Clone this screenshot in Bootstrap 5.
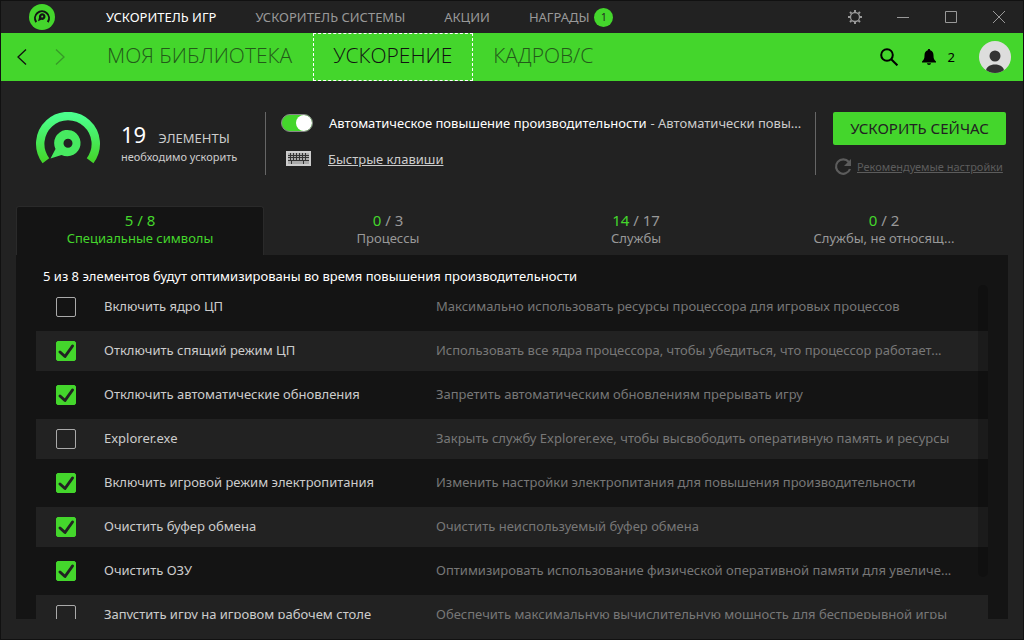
<!DOCTYPE html>
<html lang="ru" data-bs-theme="dark">
<head>
<meta charset="utf-8">
<meta name="viewport" content="width=device-width, initial-scale=1">
<title>Ускоритель игр</title>
<link href="https://cdn.jsdelivr.net/npm/bootstrap@5.3.0/dist/css/bootstrap.min.css" rel="stylesheet">
<style>
:root { --accent: #44d62c; --bg: #222; --panel: #141414; }
body { font-family: "Noto Sans", "Open Sans", sans-serif; font-size: 13px; line-height: 20px; background: var(--bg); color: #ccc; }
.app-window { border: 1px solid #111; }
button.plain { background: none; border: 0; padding: 0; color: inherit; display: flex; align-items: center; justify-content: center; }
svg { display: block; flex: none; }

.title-bar { height: 32px; padding-left: 28px; }
.title-menu { margin-left: 51px; gap: 39px; }
.title-menu a { color: #999; text-decoration: none; }
.title-menu a.active { color: #fff; }
.count-badge { width: 19px; height: 19px; font-size: 10px; background: var(--accent); color: #222; margin-left: 5px; }
.window-buttons { color: #999; }
.window-buttons button { width: 48px; height: 32px; }

.main-bar { height: 48px; background: var(--accent); color: #000; padding: 0 12px 0 10px; }
.main-bar .arrow { width: 22px; height: 48px; }
.main-tabs { margin-left: 16px; }
.main-tabs a { font-family: "Open Sans", "Noto Sans", sans-serif; font-weight: 300; font-size: 21px; line-height: 42px; height: 48px; padding: 0 20px 0 19px; border: 1px solid transparent; color: #235a1a; text-decoration: none; white-space: nowrap; }
.main-tabs a.active { color: #111; border: 1px dashed #fff; }

.summary { padding: 31px 15px 0; height: 125px; }
.summary .divided { height: 63px; border-left: 1px solid #666; }
.big-count { font-size: 22px; line-height: 26px; color: #fff; }
.count-note { font-size: 11px; line-height: 18px; }
.boost-info { width: 249px; padding-left: 19px; }
.boost-text { padding-top: 9px; }
.boost-switch.form-check-input { width: 32px; height: 18px; margin: 0; border: 1px solid #999; background-color: #333; box-shadow: none; flex: none; }
.boost-switch.form-check-input:checked { background-color: var(--accent); border-color: #888; --bs-form-switch-bg: url("data:image/svg+xml,%3csvg xmlns='http://www.w3.org/2000/svg' viewBox='-4 -4 8 8'%3e%3ccircle r='4' fill='%23fff'/%3e%3c/svg%3e"); background-image: var(--bs-form-switch-bg); background-position: right center; }
.options { padding: 1px 15px 0; }
.options a { color: #ccc; }
.actions { width: 193px; padding-left: 17px; flex: none; }
.btn-boost { background: var(--accent); color: #222; font-size: 15px; line-height: 21px; padding: 6px 0; border: 0; border-radius: 2px; width: 173px; white-space: nowrap; }
.btn-boost:hover { background: #5be045; color: #222; }
.actions a { color: #5c5c5c; font-size: 11px; white-space: nowrap; }

.group-tabs { margin: 0 15px; height: 49px; }
.group-tabs .nav-link { display: flex; flex-direction: column; align-items: center; height: 49px; padding: 4px 8px 0; background: none; border: 1px solid transparent; border-bottom: 0; border-radius: 0; color: #999; line-height: 18px; }
.group-tabs .tally { font-size: 15px; }
.group-tabs .tally b { font-weight: 400; color: var(--accent); }
.group-tabs .nav-link.active { background: var(--panel); color: var(--accent); border-color: #2a2a2a; border-radius: 3px 3px 0 0; }

.list-panel { margin: 0 15px 20px; padding: 11px 20px 0; background: var(--panel); }
.list-panel p { color: #fff; margin: 0 0 1px 7px; }
.list-body { min-height: 0; }
.item-row { display: grid; grid-template-columns: 48px 332px 1fr; align-items: center; height: 40px; margin-bottom: 4px; padding: 0 20px; }
.item-row:nth-child(even) { background: #222; }
.item-row label, .item-row .desc { padding-bottom: 2px; white-space: nowrap; }
.item-row label { color: #ccc; }
.item-row .desc { color: #777; }
.item-row .form-check-input { width: 20px; height: 20px; margin: 0; border: 1px solid #aaa; border-radius: 2px; background-color: transparent; box-shadow: none; }
.item-row .form-check-input:checked { background-color: var(--accent); border-color: var(--accent); background-size: 20px; background-image: url("data:image/svg+xml,%3csvg xmlns='http://www.w3.org/2000/svg' viewBox='0 0 20 20'%3e%3cpath fill='none' stroke='%23222' stroke-width='3' stroke-linecap='round' stroke-linejoin='round' d='M4 11l5 4.500L16.500 5'/%3e%3c/svg%3e"); }
.scroll-thumb { position: absolute; right: 0; top: -2px; bottom: 42px; width: 10px; border-radius: 5px; background: rgba(0,0,0,.2); }
</style>
</head>
<body>
<div class="app-window d-flex flex-column vh-100 overflow-hidden">
  <header class="title-bar d-flex align-items-center flex-shrink-0">
    <svg width="26" height="26" viewBox="0 0 26 26"><circle cx="13" cy="13" r="13" fill="#44d62c"/><path d="M7.200 18.100A7 7 0 1 1 18.800 18.100" fill="none" stroke="#141414" stroke-width="2"/><path fill="#141414" fill-rule="evenodd" d="M9 17.200l1-3.800a3.300 3.300 0 1 1 2.300 2.400zM13.200 11.600a1 1 0 1 0 .1 2 1 1 0 0 0-.1-2z"/></svg>
    <nav class="title-menu d-flex align-items-center text-nowrap">
      <a href="#" class="active">УСКОРИТЕЛЬ ИГР</a>
      <a href="#">УСКОРИТЕЛЬ СИСТЕМЫ</a>
      <a href="#">АКЦИИ</a>
      <a href="#" class="d-flex align-items-center">НАГРАДЫ<span class="count-badge rounded-circle d-flex align-items-center justify-content-center">1</span></a>
    </nav>
    <div class="window-buttons d-flex ms-auto">
      <button class="plain" aria-label="Настройки"><svg width="14" height="14" viewBox="0 0 14 14" fill="none" stroke="currentColor"><circle cx="7" cy="7" r="4.500" stroke-width="1.300"/><path stroke-width="2" d="M7 0v2M7 12v2M0 7h2M12 7h2M2 2l1.400 1.400M10.600 10.600L12 12M12 2l-1.400 1.400M3.400 10.600L2 12"/></svg></button>
      <button class="plain" aria-label="Свернуть"><svg width="12" height="12" viewBox="0 0 12 12" stroke="currentColor"><path d="M0 6.500h12"/></svg></button>
      <button class="plain" aria-label="Развернуть"><svg width="12" height="12" viewBox="0 0 12 12" fill="none" stroke="currentColor"><path d="M.5.5h11v11H.5z"/></svg></button>
      <button class="plain" aria-label="Закрыть"><svg width="12" height="12" viewBox="0 0 12 12" stroke="currentColor"><path d="M0 0l12 12M12 0L0 12"/></svg></button>
    </div>
  </header>

  <div class="main-bar d-flex align-items-center flex-shrink-0">
    <button class="plain arrow me-3" aria-label="Назад"><svg width="10" height="16" viewBox="0 0 10 16" fill="none" stroke="#111" stroke-width="1.300"><path d="M9 .5L1 8l8 7.500"/></svg></button>
    <button class="plain arrow" aria-label="Вперёд"><svg width="10" height="16" viewBox="0 0 10 16" fill="none" stroke="#379a28" stroke-width="1.300"><path d="M1 .5L9 8l-8 7.500"/></svg></button>
    <nav class="main-tabs d-flex">
      <a href="#">МОЯ БИБЛИОТЕКА</a>
      <a href="#" class="active">УСКОРЕНИЕ</a>
      <a href="#">КАДРОВ/С</a>
    </nav>
    <div class="d-flex align-items-center ms-auto">
      <button class="plain me-4" aria-label="Поиск"><svg width="18" height="18" viewBox="0 0 18 18" fill="none" stroke="#000" stroke-width="2"><circle cx="7" cy="7" r="5.800"/><path d="M11.200 11.200l6.200 6.200"/></svg></button>
      <button class="plain" aria-label="Уведомления"><svg width="14" height="16" viewBox="0 0 14 16"><path d="M7 0c.8 0 1.200.5 1.200 1.300C10.700 2 11.500 4 11.500 6.500c0 3 .6 4.200 2.500 6V13.500H0v-1c1.900-1.800 2.500-3 2.500-6 0-2.500.8-4.500 3.300-5.200C5.800.5 6.200 0 7 0zM5 14.300h4c0 1-.9 1.700-2 1.700s-2-.7-2-1.700z"/></svg><span class="ms-2 ps-1">2</span></button>
      <button class="plain ms-4" aria-label="Профиль"><svg width="32" height="32" viewBox="0 0 32 32"><defs><clipPath id="face"><circle cx="16" cy="16" r="16"/></clipPath></defs><g clip-path="url(#face)"><path fill="#ddd" d="M0 0h32v32H0z"/><circle cx="16" cy="15" r="5.500" fill="#333"/><path fill="#333" d="M7 32v-2c0-4 4-6.500 9-6.500s9 2.500 9 6.500v2z"/></g></svg></button>
    </div>
  </div>

  <section class="summary d-flex flex-shrink-0">
    <div class="boost-info d-flex flex-shrink-0">
      <svg width="66" height="66" viewBox="0 0 66 66"><defs><linearGradient id="ring" x1="0" y1="0" x2="0" y2="1"><stop offset="0" stop-color="#4bff8c"/><stop offset="1" stop-color="#44d62c"/></linearGradient></defs><path fill="none" stroke="url(#ring)" stroke-width="8.400" d="M10.900 48.700A27.800 27.800 0 1 1 55.100 48.700"/><path fill="#47ea60" fill-rule="evenodd" d="M15.500 46.500l5-9.500A13.200 13.200 0 1 1 26.500 43zM33 26.700a4.500 4.500 0 1 0 0 9 4.500 4.500 0 0 0 0-9z"/></svg>
      <div class="boost-text text-nowrap ms-3 ps-1">
        <div><span class="big-count">19</span><span class="ms-2 ps-1">ЭЛЕМЕНТЫ</span></div>
        <div class="count-note">необходимо ускорить</div>
      </div>
    </div>
    <div class="divided options flex-fill overflow-hidden">
      <div class="d-flex align-items-center form-switch p-0">
        <input class="form-check-input boost-switch" type="checkbox" role="switch" id="auto" checked>
        <label for="auto" class="text-white ms-3 text-nowrap">Автоматическое повышение производительности</label>
        <span class="ms-1 text-nowrap">- Автоматически повы...</span>
      </div>
      <div class="d-flex align-items-center mt-3 ps-1">
        <svg width="27" height="16" viewBox="0 0 27 16"><path fill="#ccc" d="M1 0h25v15H1z"/><path fill="#333" d="M3 2h21v11H3z"/><path fill="#aaa" d="M3 2h2v2H3zm3 0h2v2H6zm3 0h2v2H9zm3 0h2v2h-2zm3 0h2v2h-2zm3 0h2v2h-2zm3 0h3v2h-3zM3 5h2v4H3zm3 0h2v4H6zm3 0h2v4H9zm3 0h2v4h-2zm3 0h2v4h-2zm3 0h2v4h-2zm3 0h3v4h-3zM3 10h3v3H3zm4 0h11v3H7zm12 0h5v3h-5z"/><path stroke="#333" d="M3 6.500h21"/></svg>
        <a href="#" class="ms-3">Быстрые клавиши</a>
      </div>
    </div>
    <div class="divided actions">
      <button class="btn btn-boost">УСКОРИТЬ СЕЙЧАС</button>
      <div class="d-flex align-items-center mt-2 pt-1">
        <svg width="20" height="20" viewBox="0 0 20 20"><path fill="none" stroke="#5c5c5c" stroke-width="2.200" d="M15.800 5A7.200 7.200 0 1 0 17 12"/><path fill="#5c5c5c" d="M18 2v7h-7z"/></svg>
        <a href="#" class="ms-1">Рекомендуемые настройки</a>
      </div>
    </div>
  </section>

  <nav class="group-tabs nav nav-fill flex-nowrap flex-shrink-0" role="tablist">
    <button class="nav-link active col-3" role="tab"><span class="tally">5 / 8</span><span>Специальные символы</span></button>
    <button class="nav-link col-3" role="tab"><span class="tally"><b>0</b> / 3</span><span>Процессы</span></button>
    <button class="nav-link col-3" role="tab"><span class="tally"><b>14</b> / 17</span><span>Службы</span></button>
    <button class="nav-link col-3" role="tab"><span class="tally"><b>0</b> / 2</span><span>Службы, не относящ...</span></button>
  </nav>

  <main class="list-panel d-flex flex-column flex-fill overflow-hidden">
    <p>5 из 8 элементов будут оптимизированы во время повышения производительности</p>
    <div class="list-body position-relative flex-fill">
      <div class="h-100 overflow-hidden">
        <div class="item-row"><input class="form-check-input" type="checkbox" id="o1"><label for="o1">Включить ядро ЦП</label><span class="desc">Максимально использовать ресурсы процессора для игровых процессов</span></div>
        <div class="item-row"><input class="form-check-input" type="checkbox" id="o2" checked><label for="o2">Отключить спящий режим ЦП</label><span class="desc">Использовать все ядра процессора, чтобы убедиться, что процессор работает...</span></div>
        <div class="item-row"><input class="form-check-input" type="checkbox" id="o3" checked><label for="o3">Отключить автоматические обновления</label><span class="desc">Запретить автоматическим обновлениям прерывать игру</span></div>
        <div class="item-row"><input class="form-check-input" type="checkbox" id="o4"><label for="o4">Explorer.exe</label><span class="desc">Закрыть службу Explorer.exe, чтобы высвободить оперативную память и ресурсы</span></div>
        <div class="item-row"><input class="form-check-input" type="checkbox" id="o5" checked><label for="o5">Включить игровой режим электропитания</label><span class="desc">Изменить настройки электропитания для повышения производительности</span></div>
        <div class="item-row"><input class="form-check-input" type="checkbox" id="o6" checked><label for="o6">Очистить буфер обмена</label><span class="desc">Очистить неиспользуемый буфер обмена</span></div>
        <div class="item-row"><input class="form-check-input" type="checkbox" id="o7" checked><label for="o7">Очистить ОЗУ</label><span class="desc">Оптимизировать использование физической оперативной памяти для увеличе...</span></div>
        <div class="item-row"><input class="form-check-input" type="checkbox" id="o8"><label for="o8">Запустить игру на игровом рабочем столе</label><span class="desc">Обеспечить максимальную вычислительную мощность для беспрерывной игры</span></div>
      </div>
      <div class="scroll-thumb"></div>
    </div>
  </main>
</div>
<script src="https://cdn.jsdelivr.net/npm/bootstrap@5.3.0/dist/js/bootstrap.bundle.min.js"></script>
</body>
</html>
